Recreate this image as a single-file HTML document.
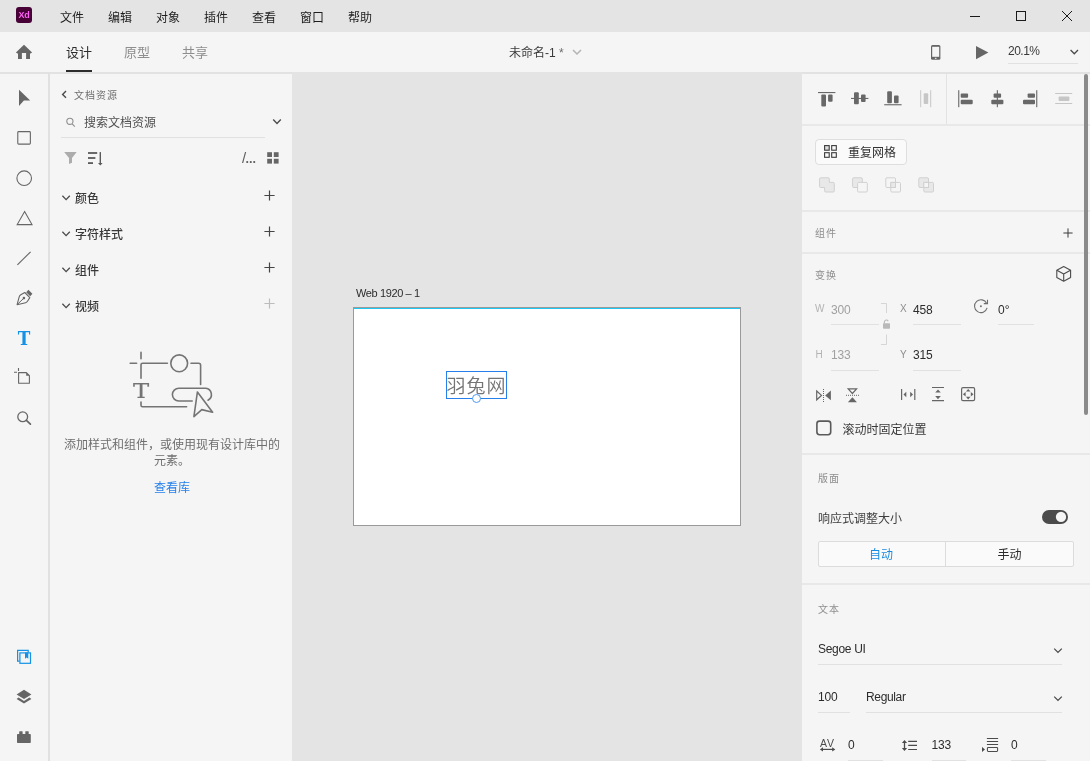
<!DOCTYPE html>
<html lang="zh-CN">
<head>
<meta charset="utf-8">
<title>未命名-1 - Adobe XD</title>
<style>
*{box-sizing:border-box;margin:0;padding:0}
html,body{width:1090px;height:761px;overflow:hidden;background:#e4e4e4}
body{font-family:"Liberation Sans","Noto Sans CJK SC",sans-serif;font-size:12px;color:#2c2c2c;position:relative;-webkit-font-smoothing:antialiased}
.a{position:absolute}
.t{position:absolute;white-space:nowrap;line-height:16px;height:16px}
svg{position:absolute;overflow:visible}
#titlebar{left:0;top:0;width:1090px;height:32px;background:#e4e4e4}
#tabbar{left:0;top:32px;width:1090px;height:40px;background:#f5f5f5}
#toolbar{left:0;top:72px;width:50px;height:689px;background:#f5f5f5;border-top:2px solid #e2e2e2;border-right:2px solid #e1e1e1}
#lpanel{left:50px;top:72px;width:242px;height:689px;background:#f5f5f5;border-top:2px solid #e2e2e2}
#canvas{left:292px;top:72px;width:510px;height:689px;background:#e4e4e4}
#rpanel{left:802px;top:72px;width:288px;height:689px;background:#f5f5f5;border-top:2px solid #e2e2e2}
.menu{top:9.5px;font-size:12px;color:#1e1e1e}
.hl{position:absolute;height:1px;background:#e1e1e1}
.sep{position:absolute;left:802px;width:288px;height:2px;background:#e8e8e8}
.g10{font-size:10px;letter-spacing:1px;color:#8e8e8e}
</style>
</head>
<body>
<div id="root" style="position:absolute;left:0;top:0;width:1090px;height:761px;will-change:transform">
<!-- ============ TITLE BAR ============ -->
<div class="a" id="titlebar"></div>
<div class="a" style="left:16px;top:7px;width:16px;height:16px;border-radius:3px;background:#470137"></div>
<div class="t" style="left:16px;top:7px;width:16px;text-align:center;font-size:9px;font-weight:bold;color:#ff61f6;letter-spacing:-0.3px">Xd</div>
<div class="t menu" style="left:60px">文件</div>
<div class="t menu" style="left:108px">编辑</div>
<div class="t menu" style="left:156px">对象</div>
<div class="t menu" style="left:204px">插件</div>
<div class="t menu" style="left:252px">查看</div>
<div class="t menu" style="left:300px">窗口</div>
<div class="t menu" style="left:348px">帮助</div>
<svg style="left:960px;top:0" width="130" height="32" viewBox="0 0 130 32" fill="none" stroke="#1a1a1a" stroke-width="1">
  <path d="M10 16.5H20"/>
  <rect x="56.5" y="11.5" width="9" height="9"/>
  <path d="M102 11L112 21M112 11L102 21"/>
</svg>

<!-- ============ TAB BAR ============ -->
<div class="a" id="tabbar"></div>
<svg style="left:16px;top:44px" width="16" height="15" viewBox="0 0 16 15"><path d="M8 0.7L-0.1 8.5L2 9.8V14.9H5.9V8.9H10.1V14.9H14V9.8L16.1 8.5Z" fill="#666"/></svg>
<div class="t" style="left:66px;top:43.5px;font-size:13px;line-height:18px;height:18px;color:#2c2c2c">设计</div>
<div class="a" style="left:66px;top:70px;width:26px;height:2px;background:#2c2c2c"></div>
<div class="t" style="left:124px;top:43.5px;font-size:13px;line-height:18px;height:18px;color:#8e8e8e">原型</div>
<div class="t" style="left:182px;top:43.5px;font-size:13px;line-height:18px;height:18px;color:#8e8e8e">共享</div>
<div class="t" style="left:509px;top:45px;font-size:12px;color:#3a3a3a">未命名-1 <span style="color:#6e6e6e">*</span></div>
<svg style="left:572px;top:49px" width="10" height="7" viewBox="0 0 10 7" fill="none" stroke="#b3b3b3" stroke-width="1.5"><path d="M1 1L5 5L9 1"/></svg>
<!-- phone -->
<svg style="left:931px;top:45px" width="10" height="15" viewBox="0 0 10 15"><rect x="0" y="0" width="9.4" height="14.8" rx="1.5" fill="#666"/><rect x="1.2" y="1.8" width="7" height="10" fill="#f5f5f5"/><rect x="3.9" y="12.8" width="1.6" height="1" fill="#f5f5f5"/></svg>
<!-- play -->
<svg style="left:976px;top:46px" width="13" height="14" viewBox="0 0 13 14"><path d="M0 0L12.4 6.6L0 13.2Z" fill="#666"/></svg>
<div class="t" style="left:1008px;top:43px;font-size:12px;color:#3a3a3a;letter-spacing:-0.5px">20.1%</div>
<div class="hl" style="left:1008px;top:63px;width:70px"></div>
<svg style="left:1070px;top:48.5px" width="9" height="7" viewBox="0 0 9 7" fill="none" stroke="#4b4b4b" stroke-width="1.3"><path d="M0.6 1L4.3 4.8L8 1"/></svg>

<!-- ============ PANELS ============ -->
<div class="a" id="toolbar"></div>
<div class="a" id="lpanel"></div>
<div class="a" id="canvas"></div>
<div class="a" id="rpanel"></div>

<!--TOOLBAR-ICONS-->
<!-- select arrow -->
<svg style="left:19px;top:89px" width="12" height="18" viewBox="19 89 12 18"><path d="M19 89.8L30.2 100.6H23.9L19 106.1Z" fill="#666"/></svg>
<!-- rectangle -->
<svg style="left:17px;top:131px" width="15" height="15" viewBox="0 0 15 15"><rect x="0.78" y="0.63" width="12.58" height="12.53" rx="0.9" fill="none" stroke="#666" stroke-width="1.1"/></svg>
<!-- ellipse -->
<svg style="left:16px;top:170px" width="17" height="17" viewBox="0 0 17 17"><circle cx="8.2" cy="8.2" r="7.3" fill="none" stroke="#666" stroke-width="1.1"/></svg>
<!-- triangle -->
<svg style="left:16px;top:210px" width="18" height="16" viewBox="0 0 18 16"><path d="M8.6 1.6L16 14.6H1.2Z" fill="none" stroke="#666" stroke-width="1.1" stroke-linejoin="miter"/></svg>
<!-- line -->
<svg style="left:17px;top:251px" width="15" height="15" viewBox="0 0 15 15"><path d="M0.4 13.8L13.6 0.8" fill="none" stroke="#666" stroke-width="1.1"/></svg>
<!-- pen -->
<svg style="left:16px;top:289px" width="17" height="17" viewBox="0 0 17 17"><path d="M1.1 15.7L3.2 7.8Q3.6 6.5 4.8 5.8L8.8 3.5L13.8 8.6L11.5 12.3Q10.8 13.4 9.6 13.7Z" fill="none" stroke="#666" stroke-width="1.1" stroke-linejoin="round"/><path d="M1.4 15.4L7.4 9.6" stroke="#666" stroke-width="1" fill="none"/><circle cx="7.9" cy="9.1" r="1.3" fill="#666"/><path d="M10.2 3.2L12.4 0.8L16.4 4.8L14.2 7.2Z" fill="#666"/></svg>
<!-- text tool -->
<div class="t" style="left:16px;top:328px;width:16px;text-align:center;font-family:'DejaVu Serif','Liberation Serif',serif;font-weight:bold;font-size:19.2px;line-height:22px;height:22px;color:#1592e6;transform:scaleX(0.88)">T</div>
<!-- artboard -->
<svg style="left:13px;top:367px" width="18" height="18" viewBox="0 0 18 18" fill="none" stroke="#666" stroke-width="1.1"><path d="M5.5 1V4M1 5.3H4"/><path d="M5.6 5.6H13.4L16.4 8.6V16.2H5.6Z" stroke-linejoin="round"/><path d="M13.2 5.6V8.8H16.4Z" fill="#666" stroke="none"/></svg>
<!-- zoom -->
<svg style="left:16px;top:410px" width="16" height="16" viewBox="0 0 16 16" fill="none" stroke="#666"><circle cx="6.7" cy="6.8" r="4.9" stroke-width="1.3"/><path d="M10.4 10.4L14.4 14.2" stroke-width="1.7" stroke-linecap="round"/></svg>
<!-- libraries (active) -->
<svg style="left:16px;top:649px" width="16" height="16" viewBox="0 0 16 16" fill="none" stroke="#1592e6" stroke-width="1.2"><path d="M3.6 12.2H1.6V1.4H12.2V3.6"/><rect x="3.9" y="3.9" width="10.6" height="10.4"/><path d="M9 3.6H12.3V9.8L10.65 8.4L9 9.8Z" fill="#1592e6" stroke="none"/></svg>
<!-- layers -->
<svg style="left:16px;top:689px" width="16" height="16" viewBox="0 0 16 16" fill="#666"><path d="M8 0.8L15.4 5.4L8 10L0.6 5.4Z"/><path d="M2.6 8.6L8 12L13.4 8.6L15.4 9.9L8 14.6L0.6 9.9Z"/></svg>
<!-- plugins -->
<svg style="left:17px;top:731px" width="14" height="12" viewBox="0 0 14 12" fill="#666"><rect x="0" y="3" width="13.8" height="9" rx="0.8"/><rect x="2.2" y="0.2" width="3.4" height="4" rx="0.6"/><rect x="8.3" y="0.2" width="3.4" height="4" rx="0.6"/></svg>
<!--LEFT-PANEL-->
<svg style="left:61px;top:90px" width="7" height="9" viewBox="0 0 7 9" fill="none" stroke="#4b4b4b" stroke-width="1.4"><path d="M5 1L1.6 4.4L5 7.8"/></svg>
<div class="t" style="left:74px;top:87.7px;font-size:10px;letter-spacing:1px;color:#6e6e6e">文档资源</div>
<svg style="left:66px;top:117px" width="10" height="11" viewBox="0 0 10 11" fill="none" stroke="#8e8e8e" stroke-width="1.1"><circle cx="3.9" cy="4.3" r="3.1"/><path d="M6.2 6.8L8.8 9.6"/></svg>
<div class="t" style="left:84px;top:114.5px;font-size:12px;color:#505050">搜索文档资源</div>
<svg style="left:272px;top:118px" width="10" height="8" viewBox="0 0 10 8" fill="none" stroke="#4b4b4b" stroke-width="1.4"><path d="M1.2 1.6L5 5.4L8.8 1.6"/></svg>
<div class="hl" style="left:61px;top:137px;width:204px"></div>
<!-- filter -->
<svg style="left:64px;top:152px" width="13" height="13" viewBox="0 0 13 13"><path d="M0.2 0.1H12.7L8 6V10.8L5 12.1V6Z" fill="#acacac"/></svg>
<!-- sort -->
<svg style="left:88px;top:152px" width="16" height="14" viewBox="0 0 16 14" fill="#5a5a5a"><rect x="0" y="0.1" width="9.2" height="1.8"/><rect x="0" y="5.1" width="7.4" height="1.8"/><rect x="0" y="10.2" width="5" height="1.8"/><rect x="11.6" y="0.1" width="1.4" height="11.4"/><path d="M10 10.9H14.6L12.3 13.4Z"/></svg>
<div class="t" style="left:242px;top:148px;line-height:20px;height:20px;color:#606060"><span style="font-size:15px;letter-spacing:-0.6px">/</span><span style="font-size:12.6px;font-weight:bold">...</span></div>
<svg style="left:267px;top:152px" width="12" height="12" viewBox="0 0 12 12" fill="#666"><rect x="0.2" y="0.2" width="4.8" height="4.8"/><rect x="6.8" y="0.2" width="4.8" height="4.8"/><rect x="0.2" y="6.8" width="4.8" height="4.8"/><rect x="6.8" y="6.8" width="4.8" height="4.8"/></svg>
<!-- sections -->
<svg style="left:61px;top:194px" width="10" height="8" viewBox="0 0 10 8" fill="none" stroke="#4b4b4b" stroke-width="1.3"><path d="M1.4 1.8L5.1 5.6L8.8 1.8"/></svg>
<div class="t" style="left:75px;top:190.5px;font-weight:500;color:#3a3a3a">颜色</div>
<svg style="left:264px;top:190px" width="11" height="11" viewBox="0 0 11 11" fill="none" stroke="#454545" stroke-width="1.2"><path d="M5.5 0.4V10.6M0.4 5.5H10.6"/></svg>
<svg style="left:61px;top:230px" width="10" height="8" viewBox="0 0 10 8" fill="none" stroke="#4b4b4b" stroke-width="1.3"><path d="M1.4 1.8L5.1 5.6L8.8 1.8"/></svg>
<div class="t" style="left:75px;top:226.5px;font-weight:500;color:#3a3a3a">字符样式</div>
<svg style="left:264px;top:226px" width="11" height="11" viewBox="0 0 11 11" fill="none" stroke="#454545" stroke-width="1.2"><path d="M5.5 0.4V10.6M0.4 5.5H10.6"/></svg>
<svg style="left:61px;top:266px" width="10" height="8" viewBox="0 0 10 8" fill="none" stroke="#4b4b4b" stroke-width="1.3"><path d="M1.4 1.8L5.1 5.6L8.8 1.8"/></svg>
<div class="t" style="left:75px;top:262.5px;font-weight:500;color:#3a3a3a">组件</div>
<svg style="left:264px;top:262px" width="11" height="11" viewBox="0 0 11 11" fill="none" stroke="#454545" stroke-width="1.2"><path d="M5.5 0.4V10.6M0.4 5.5H10.6"/></svg>
<svg style="left:61px;top:302px" width="10" height="8" viewBox="0 0 10 8" fill="none" stroke="#4b4b4b" stroke-width="1.3"><path d="M1.4 1.8L5.1 5.6L8.8 1.8"/></svg>
<div class="t" style="left:75px;top:298.5px;font-weight:500;color:#3a3a3a">视频</div>
<svg style="left:264px;top:298px" width="11" height="11" viewBox="0 0 11 11" fill="none" stroke="#bcbcbc" stroke-width="1.2"><path d="M5.5 0.4V10.6M0.4 5.5H10.6"/></svg>
<!-- illustration -->
<svg style="left:128px;top:350px" width="88" height="70" viewBox="128 350 88 70" fill="none" stroke="#747474" stroke-width="1.6" stroke-linecap="round" stroke-linejoin="round">
  <path d="M141 352.4V358.8M130.2 363.3H136.6"/>
  <path d="M141 378.2V364.8Q141 363.3 142.5 363.3H167.4"/>
  <circle cx="179.2" cy="363.3" r="8.4"/>
  <path d="M191 363.3H198.6Q200.6 363.3 200.6 365.3V384.4"/>
  <path d="M141 402V405.2Q141 406.8 142.6 406.8H186.6"/>
  <path d="M192.2 401H178.8A6.4 6.4 0 0 1 178.8 388.2H205.8A6.4 6.4 0 0 1 208 400.2"/>
  <path d="M197.4 392L193.9 416.6L201.8 409.6L212.6 412.2Z"/>
</svg>
<div class="t" style="left:131px;top:378px;-webkit-text-stroke:0.2px #747474;width:20px;text-align:center;font-family:'DejaVu Serif','Liberation Serif',serif;font-size:20.6px;line-height:26px;height:26px;color:#747474;transform:scaleX(1.18)">T</div>
<div class="t" style="left:51px;top:436.8px;width:242px;text-align:center;line-height:16.5px;height:auto;white-space:normal;color:#6e6e6e;padding:0 13px">添加样式和组件，或使用现有设计库中的元素。</div>
<div class="t" style="left:51px;top:479.5px;width:242px;text-align:center;color:#2680eb">查看库</div>
<!--CANVAS-->
<div class="t" style="left:356px;top:285px;font-size:11px;letter-spacing:-0.38px;color:#2c2c2c">Web 1920 – 1</div>
<div class="a" style="left:353px;top:307px;width:388px;height:219px;background:#fff;border:1px solid #9a9a9a"></div>
<div class="a" style="left:354px;top:308px;width:386px;height:1px;background:#1ec8f0"></div>
<div class="t" style="left:446.4px;top:373.1px;font-size:19px;letter-spacing:1px;line-height:28px;height:28px;color:#747474;font-weight:350">羽兔网</div>
<div class="a" style="left:446px;top:371px;width:61px;height:28px;border:1px solid #2680eb"></div>
<div class="a" style="left:472px;top:394px;width:9px;height:9px;border-radius:50%;border:1px solid #4b9cf5;background:#fff"></div>
<!--RIGHT-PANEL-->
<!-- align icons -->
<svg style="left:802px;top:74px" width="288" height="50" viewBox="802 74 288 50">
 <g fill="#686868">
  <rect x="818" y="92" width="17.4" height="1.1"/><rect x="821.3" y="94.4" width="4.7" height="12" rx="1"/><rect x="828.1" y="94.4" width="4.5" height="7.4" rx="1"/>
  <rect x="851" y="97.9" width="17.4" height="1.1"/><rect x="854" y="92.2" width="4.8" height="12" rx="1"/><rect x="861" y="94.6" width="4.6" height="7.4" rx="1"/>
  <rect x="884.2" y="104.2" width="17.4" height="1.1"/><rect x="887.2" y="91.2" width="4.7" height="12" rx="1"/><rect x="894" y="95.6" width="4.6" height="7.6" rx="1"/>
  <rect x="958.2" y="90.2" width="1.1" height="17"/><rect x="960.7" y="93.4" width="7.4" height="4.4" rx="1"/><rect x="960.7" y="99.8" width="12" height="4.4" rx="1"/>
  <rect x="996.8" y="90.2" width="1.1" height="17"/><rect x="993.6" y="93.4" width="7.5" height="4.4" rx="1"/><rect x="991.3" y="99.8" width="12.1" height="4.4" rx="1"/>
  <rect x="1036.2" y="90.2" width="1.1" height="17"/><rect x="1027.6" y="93.4" width="7.4" height="4.4" rx="1"/><rect x="1023" y="99.8" width="12" height="4.4" rx="1"/>
 </g>
 <g fill="#c6c6c6">
  <rect x="920.2" y="90.2" width="1" height="17"/><rect x="930.2" y="90.2" width="1" height="17"/><rect x="923.7" y="93.2" width="4.5" height="10.8" rx="1"/>
  <rect x="1055.2" y="93" width="17" height="1"/><rect x="1055.2" y="103" width="17" height="1"/><rect x="1058.6" y="96.6" width="10.8" height="4.4" rx="1"/>
 </g>
 <rect x="946" y="74" width="1" height="50" fill="#e3e3e3"/>
</svg>
<div class="sep" style="top:124px"></div>
<!-- repeat grid -->
<div class="a" style="left:815px;top:139px;width:92px;height:26px;border:1px solid #dedede;border-radius:4px;background:#fafafa"></div>
<svg style="left:824px;top:145px" width="13" height="13" viewBox="0 0 13 13" fill="none" stroke="#3a3a3a" stroke-width="1.1"><rect x="0.6" y="0.6" width="4.6" height="4.6" fill="#dcdcdc"/><rect x="7.7" y="0.6" width="4.6" height="4.6"/><rect x="0.6" y="7.7" width="4.6" height="4.6"/><rect x="7.7" y="7.7" width="4.6" height="4.6"/></svg>
<div class="t" style="left:848px;top:144.5px;color:#323232">重复网格</div>
<!-- boolean ops -->
<svg style="left:818px;top:176px" width="120" height="18" viewBox="818 176 120 18" stroke="#d0d0d0" stroke-width="1" fill="#e8e8e8">
  <path d="M819.6 178.9Q819.6 177.8 820.7 177.8H828.2Q829.3 177.8 829.3 178.9V182.4H833.2Q834.3 182.4 834.3 183.5V190.9Q834.3 192 833.2 192H825.7Q824.6 192 824.6 190.9V187.5H820.7Q819.6 187.5 819.6 186.4Z"/>
  <rect x="852.6" y="177.8" width="9.7" height="9.7" rx="1.1"/><rect x="857.6" y="182.4" width="9.7" height="9.6" rx="1.1" fill="#f5f5f5"/>
  <rect x="885.8" y="177.8" width="9.7" height="9.7" rx="1.1" fill="#f5f5f5"/><rect x="890.8" y="182.4" width="9.7" height="9.6" rx="1.1" fill="none"/><rect x="890.8" y="182.4" width="4.7" height="5.1" fill="#e8e8e8"/>
  <rect x="918.8" y="177.8" width="9.7" height="9.7" rx="1.1"/><rect x="923.8" y="182.4" width="9.7" height="9.6" rx="1.1"/><rect x="923.8" y="182.4" width="4.7" height="5.1" fill="#f5f5f5"/>
</svg>
<div class="sep" style="top:210px"></div>
<div class="t g10" style="left:815px;top:225.8px">组件</div>
<svg style="left:1063px;top:228px" width="10" height="10" viewBox="0 0 10 10" fill="none" stroke="#3a3a3a" stroke-width="1"><path d="M5 0.4V9.6M0.4 5H9.6"/></svg>
<div class="sep" style="top:252px"></div>
<!-- transform -->
<div class="t g10" style="left:815px;top:267.7px">变换</div>
<svg style="left:1056px;top:266px" width="16" height="16" viewBox="0 0 16 16" fill="none" stroke="#4b4b4b" stroke-width="1.1" stroke-linejoin="round"><path d="M7.7 0.6L14.6 4.2V11.4L7.7 15.2L0.8 11.4V4.2Z"/><path d="M0.9 4.3L7.7 8L14.5 4.3M7.7 8V15"/></svg>
<div class="t" style="left:815px;top:301.2px;font-size:10px;color:#b3b3b3">W</div>
<div class="t" style="left:831px;top:301.5px;font-size:12px;color:#a0a0a0;letter-spacing:-0.2px">300</div>
<div class="hl" style="left:831px;top:324px;width:48px"></div>
<svg style="left:880px;top:302px" width="12" height="44" viewBox="880 302 12 44" fill="none" stroke="#d5d5d5" stroke-width="1"><path d="M881 303.5H886.5V313"/><path d="M886.5 334.5V344.5H881"/><rect x="883" y="323.2" width="7" height="5.6" rx="0.8" fill="#b9b9b9" stroke="none"/><path d="M884.4 323.4V321.8A2 2 0 0 1 888.2 321.2" stroke="#b9b9b9" stroke-width="1.1"/></svg>
<div class="t" style="left:900px;top:301.2px;font-size:10px;color:#8e8e8e">X</div>
<div class="t" style="left:913px;top:301.5px;font-size:12px;color:#2c2c2c;letter-spacing:-0.2px">458</div>
<div class="hl" style="left:913px;top:324px;width:48px"></div>
<svg style="left:973px;top:299px" width="16" height="15" viewBox="0 0 16 15" fill="none" stroke="#6e6e6e" stroke-width="1.1"><path d="M14.1 8.9A6.4 6.4 0 1 1 13.7 4.4"/><path d="M14.5 0.8V4.6H10.8"/><circle cx="7.9" cy="7.2" r="0.95" fill="#6e6e6e" stroke="none"/></svg>
<div class="t" style="left:998px;top:301.5px;font-size:12px;color:#2c2c2c">0°</div>
<div class="hl" style="left:998px;top:324px;width:36px"></div>
<div class="t" style="left:815.5px;top:347.2px;font-size:10px;color:#b3b3b3">H</div>
<div class="t" style="left:831px;top:347px;font-size:12px;color:#a0a0a0;letter-spacing:-0.2px">133</div>
<div class="hl" style="left:831px;top:370px;width:48px"></div>
<div class="t" style="left:900px;top:347.2px;font-size:10px;color:#8e8e8e">Y</div>
<div class="t" style="left:913px;top:347px;font-size:12px;color:#2c2c2c;letter-spacing:-0.2px">315</div>
<div class="hl" style="left:913px;top:370px;width:48px"></div>
<!-- flip / distribute -->
<svg style="left:815px;top:386px" width="162" height="18" viewBox="815 386 162 18">
 <g fill="none" stroke="#666" stroke-width="1">
  <path d="M816.7 391L821.5 395.4L816.7 399.8Z" stroke-width="1.2"/>
  <path d="M823.5 389V402" stroke-dasharray="1 1"/>
  <path d="M848.2 388.9L852.4 393.5L856.6 388.9Z" stroke-width="1.2"/>
  <path d="M846 395.3H859" stroke-dasharray="1 1"/>
  <path d="M901.6 389V400M914.8 389V400" stroke-width="1.2"/>
  <path d="M932 387.5H944M932 400.7H944" stroke-width="1.2"/>
  <rect x="961.6" y="387.6" width="13" height="13" rx="1.4" stroke-width="1.2"/>
 </g>
 <g fill="#666">
  <path d="M830.9 390.6L825.2 395.4L830.9 400.2Z"/>
  <path d="M847.9 402.3L852.4 397.3L856.9 402.3Z"/>
  <path d="M903.5 394.5L906.3 391.8V397.2Z"/><path d="M913 394.5L910.2 391.8V397.2Z"/>
  <path d="M938 389.5L940.8 392.6H935.2Z"/><path d="M938 399.2L940.8 396.1H935.2Z"/>
  <path d="M968.2 388.9L970.5 391.6H965.9Z"/><path d="M968.2 399.5L970.5 396.8H965.9Z"/><path d="M962.9 394.2L965.6 391.9V396.5Z"/><path d="M973.5 394.2L970.8 391.9V396.5Z"/>
 </g>
</svg>
<svg style="left:815px;top:419px" width="18" height="18" viewBox="0 0 18 18"><rect x="1.9" y="2.1" width="13.8" height="13.6" rx="2.6" fill="none" stroke="#5a5a5a" stroke-width="1.6"/></svg>
<div class="t" style="left:842.5px;top:421.5px;color:#3a3a3a">滚动时固定位置</div>
<div class="sep" style="top:453px"></div>
<!-- layout -->
<div class="t g10" style="left:818px;top:470.8px">版面</div>
<div class="t" style="left:818px;top:510.5px;color:#3e3e3e">响应式调整大小</div>
<div class="a" style="left:1042px;top:510px;width:26px;height:14px;border-radius:7px;background:#4b4b4b"></div>
<svg style="left:1054px;top:510px" width="14" height="14" viewBox="0 0 14 14"><circle cx="7" cy="6.95" r="5.15" fill="#f5f5f5"/></svg>
<div class="a" style="left:818px;top:541px;width:256px;height:26px;border:1px solid #dcdcdc;border-radius:2px;background:#fafafa"></div>
<div class="a" style="left:945px;top:542px;width:1px;height:24px;background:#dcdcdc"></div>
<div class="t" style="left:818px;top:546.5px;width:126px;text-align:center;color:#1b8be0">自动</div>
<div class="t" style="left:946px;top:546.5px;width:127px;text-align:center;color:#2c2c2c">手动</div>
<div class="sep" style="top:583px"></div>
<!-- text -->
<div class="t g10" style="left:818px;top:601.8px">文本</div>
<div class="t" style="left:818px;top:641px;color:#2c2c2c;letter-spacing:-0.3px">Segoe UI</div>
<svg style="left:1053px;top:647px" width="10" height="8" viewBox="0 0 10 8" fill="none" stroke="#4b4b4b" stroke-width="1.3"><path d="M1.2 1.6L5 5.4L8.8 1.6"/></svg>
<div class="hl" style="left:818px;top:664px;width:244px"></div>
<div class="t" style="left:818px;top:689px;color:#2c2c2c;letter-spacing:-0.2px">100</div>
<div class="hl" style="left:818px;top:712px;width:32px"></div>
<div class="t" style="left:866px;top:689px;color:#2c2c2c;letter-spacing:-0.35px">Regular</div>
<svg style="left:1053px;top:695px" width="10" height="8" viewBox="0 0 10 8" fill="none" stroke="#4b4b4b" stroke-width="1.3"><path d="M1.2 1.6L5 5.4L8.8 1.6"/></svg>
<div class="hl" style="left:866px;top:712px;width:196px"></div>
<!-- AV -->
<div class="t" style="left:820px;top:736.6px;font-size:10.5px;line-height:12px;height:12px;letter-spacing:0;font-kerning:none;color:#4b4b4b">AV</div>
<svg style="left:819px;top:746px" width="18" height="7" viewBox="819 746 18 7"><path d="M822 749.4H833.2" stroke="#4b4b4b" stroke-width="1.2" fill="none"/><path d="M819.9 749.4L823 747.2V751.6Z M835.3 749.4L832.2 747.2V751.6Z" fill="#4b4b4b"/></svg>
<div class="t" style="left:848px;top:737px;color:#2c2c2c">0</div>
<div class="hl" style="left:848px;top:760px;width:35px"></div>
<!-- line spacing -->
<svg style="left:901px;top:739px" width="17" height="13" viewBox="901 739 17 13"><path d="M904.5 742V749" stroke="#4b4b4b" stroke-width="1.3" fill="none"/><path d="M904.5 740L907.1 742.9H901.9Z M904.5 750.9L907.1 748H901.9Z" fill="#4b4b4b"/><path d="M908.2 741.4H917M908.2 745.4H917M908.2 749.5H917" stroke="#4b4b4b" stroke-width="1.1" fill="none"/></svg>
<div class="t" style="left:931.5px;top:737px;color:#2c2c2c;letter-spacing:-0.2px">133</div>
<div class="hl" style="left:931.5px;top:760px;width:34px"></div>
<!-- paragraph spacing -->
<svg style="left:981px;top:737px" width="18" height="16" viewBox="981 737 18 16" fill="none" stroke="#4b4b4b" stroke-width="1.05"><path d="M986.9 738.5H998.1M986.9 741.5H998.1M986.9 744.5H998.1"/><rect x="987.4" y="747.5" width="10.2" height="3.9" rx="0.8"/><path d="M982 747L985 749.45L982 751.9Z" fill="#4b4b4b" stroke="none"/></svg>
<div class="t" style="left:1011px;top:737px;color:#2c2c2c">0</div>
<div class="hl" style="left:1011px;top:760px;width:35px"></div>
<!-- scrollbar -->
<div class="a" style="left:1084px;top:74px;width:4px;height:341px;border-radius:2px;background:#8a8a8a"></div>
</div>
</body>
</html>
